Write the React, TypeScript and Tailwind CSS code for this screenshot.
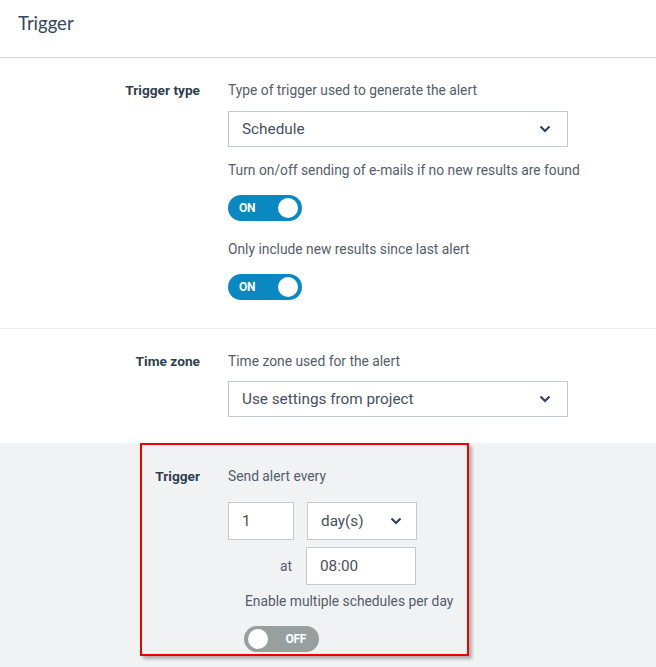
import React from "react";

function Chevron() {
  return (
    <svg width="12" height="8" viewBox="0 0 12 8" className="shrink-0">
      <path d="M1.5 1.5 L6 6 L10.5 1.5" fill="none" stroke="#34435a" strokeWidth="2.2" />
    </svg>
  );
}

function Select({ value, className }: { value: string; className: string }) {
  return (
    <div
      className={`flex items-center justify-between bg-white border border-[#c5cad1] text-[15.3px] text-[#46505e] ${className}`}
    >
      <span className="pt-[1px]">{value}</span>
      <Chevron />
    </div>
  );
}

function Toggle({ on }: { on: boolean }) {
  if (on) {
    return (
      <div className="flex items-center justify-between w-[74px] h-[26px] rounded-full bg-[#0a88c2] pl-[11px] pr-[4px]">
        <span className="text-[12px] font-bold text-white tracking-tight">ON</span>
        <span className="w-[20px] h-[20px] rounded-full bg-white" />
      </div>
    );
  }
  return (
    <div className="flex items-center w-[75px] h-[26px] rounded-full bg-[#979f9f] pl-[4px] pr-[13px]">
      <span className="w-[20px] h-[20px] rounded-full bg-white" />
      <span className="ml-auto text-[12px] font-bold text-white tracking-tight">OFF</span>
    </div>
  );
}

function Row({ label, children }: { label: string; children: React.ReactNode }) {
  return (
    <div className="flex">
      <div className="w-[200px] shrink-0 text-right text-[13.7px] leading-[18px] font-bold text-[#303f50]">
        {label}
      </div>
      <div className="ml-[28px] flex flex-col items-start">{children}</div>
    </div>
  );
}

function Hint({ children, className = "" }: { children: React.ReactNode; className?: string }) {
  return <p className={`text-[13.8px] leading-[18px] text-[#535d6b] ${className}`}>{children}</p>;
}

export default function App() {
  return (
    <div className="w-[656px] h-[667px] bg-white flex flex-col font-['Roboto',sans-serif] overflow-hidden">
      <header className="h-[58px] shrink-0 border-b border-[#d8d8d8] pl-[18px] pt-[10px]">
        <h1 className="font-['Lato',sans-serif] text-[18.5px] leading-[26px] text-[#34475c]">Trigger</h1>
      </header>

      <section className="pt-[23px] pb-[28px] border-b border-[#eceef0]">
        <Row label="Trigger type">
          <Hint>Type of trigger used to generate the alert</Hint>
          <Select value="Schedule" className="mt-[12px] w-[340px] h-[36px] pl-[13px] pr-[16px]" />
          <Hint className="mt-[14px]">Turn on/off sending of e-mails if no new results are found</Hint>
          <div className="mt-[16px]">
            <Toggle on />
          </div>
          <Hint className="mt-[19px]">Only include new results since last alert</Hint>
          <div className="mt-[16px]">
            <Toggle on />
          </div>
        </Row>
      </section>

      <section className="pt-[23px] pb-[26px]">
        <Row label="Time zone">
          <Hint>Time zone used for the alert</Hint>
          <Select value="Use settings from project" className="mt-[11px] w-[340px] h-[36px] pl-[13px] pr-[16px]" />
        </Row>
      </section>

      <section className="flex-1 bg-[#f1f2f4]">
        <div className="ml-[140px] w-[329px] border-2 border-[#ee0000] shadow-[3px_3px_3px_rgba(0,0,0,0.28)] pt-[22px] pb-[2px]">
          <div className="flex">
            <div className="w-[58px] shrink-0 text-right text-[13.7px] leading-[18px] font-bold text-[#303f50]">
              Trigger
            </div>
            <div className="ml-[28px] flex flex-col items-start">
              <Hint>Send alert every</Hint>
              <div className="mt-[17px] flex gap-[13px]">
                <div className="w-[66px] h-[38px] bg-white border border-[#c5cad1] flex items-center pl-[13px] text-[15.3px] text-[#46505e]">
                  1
                </div>
                <Select value="day(s)" className="w-[110px] h-[38px] pl-[13px] pr-[14px]" />
              </div>
              <div className="mt-[7px] flex items-center">
                <span className="ml-[52px] w-[26px] text-[13.8px] text-[#535d6b]">at</span>
                <div className="w-[110px] h-[38px] bg-white border border-[#c5cad1] flex items-center pl-[13px] text-[15.3px] text-[#46505e]">
                  08:00
                </div>
              </div>
              <Hint className="mt-[7px] ml-[17px]">Enable multiple schedules per day</Hint>
              <div className="mt-[16px] ml-[16px]">
                <Toggle on={false} />
              </div>
            </div>
          </div>
        </div>
      </section>
    </div>
  );
}
